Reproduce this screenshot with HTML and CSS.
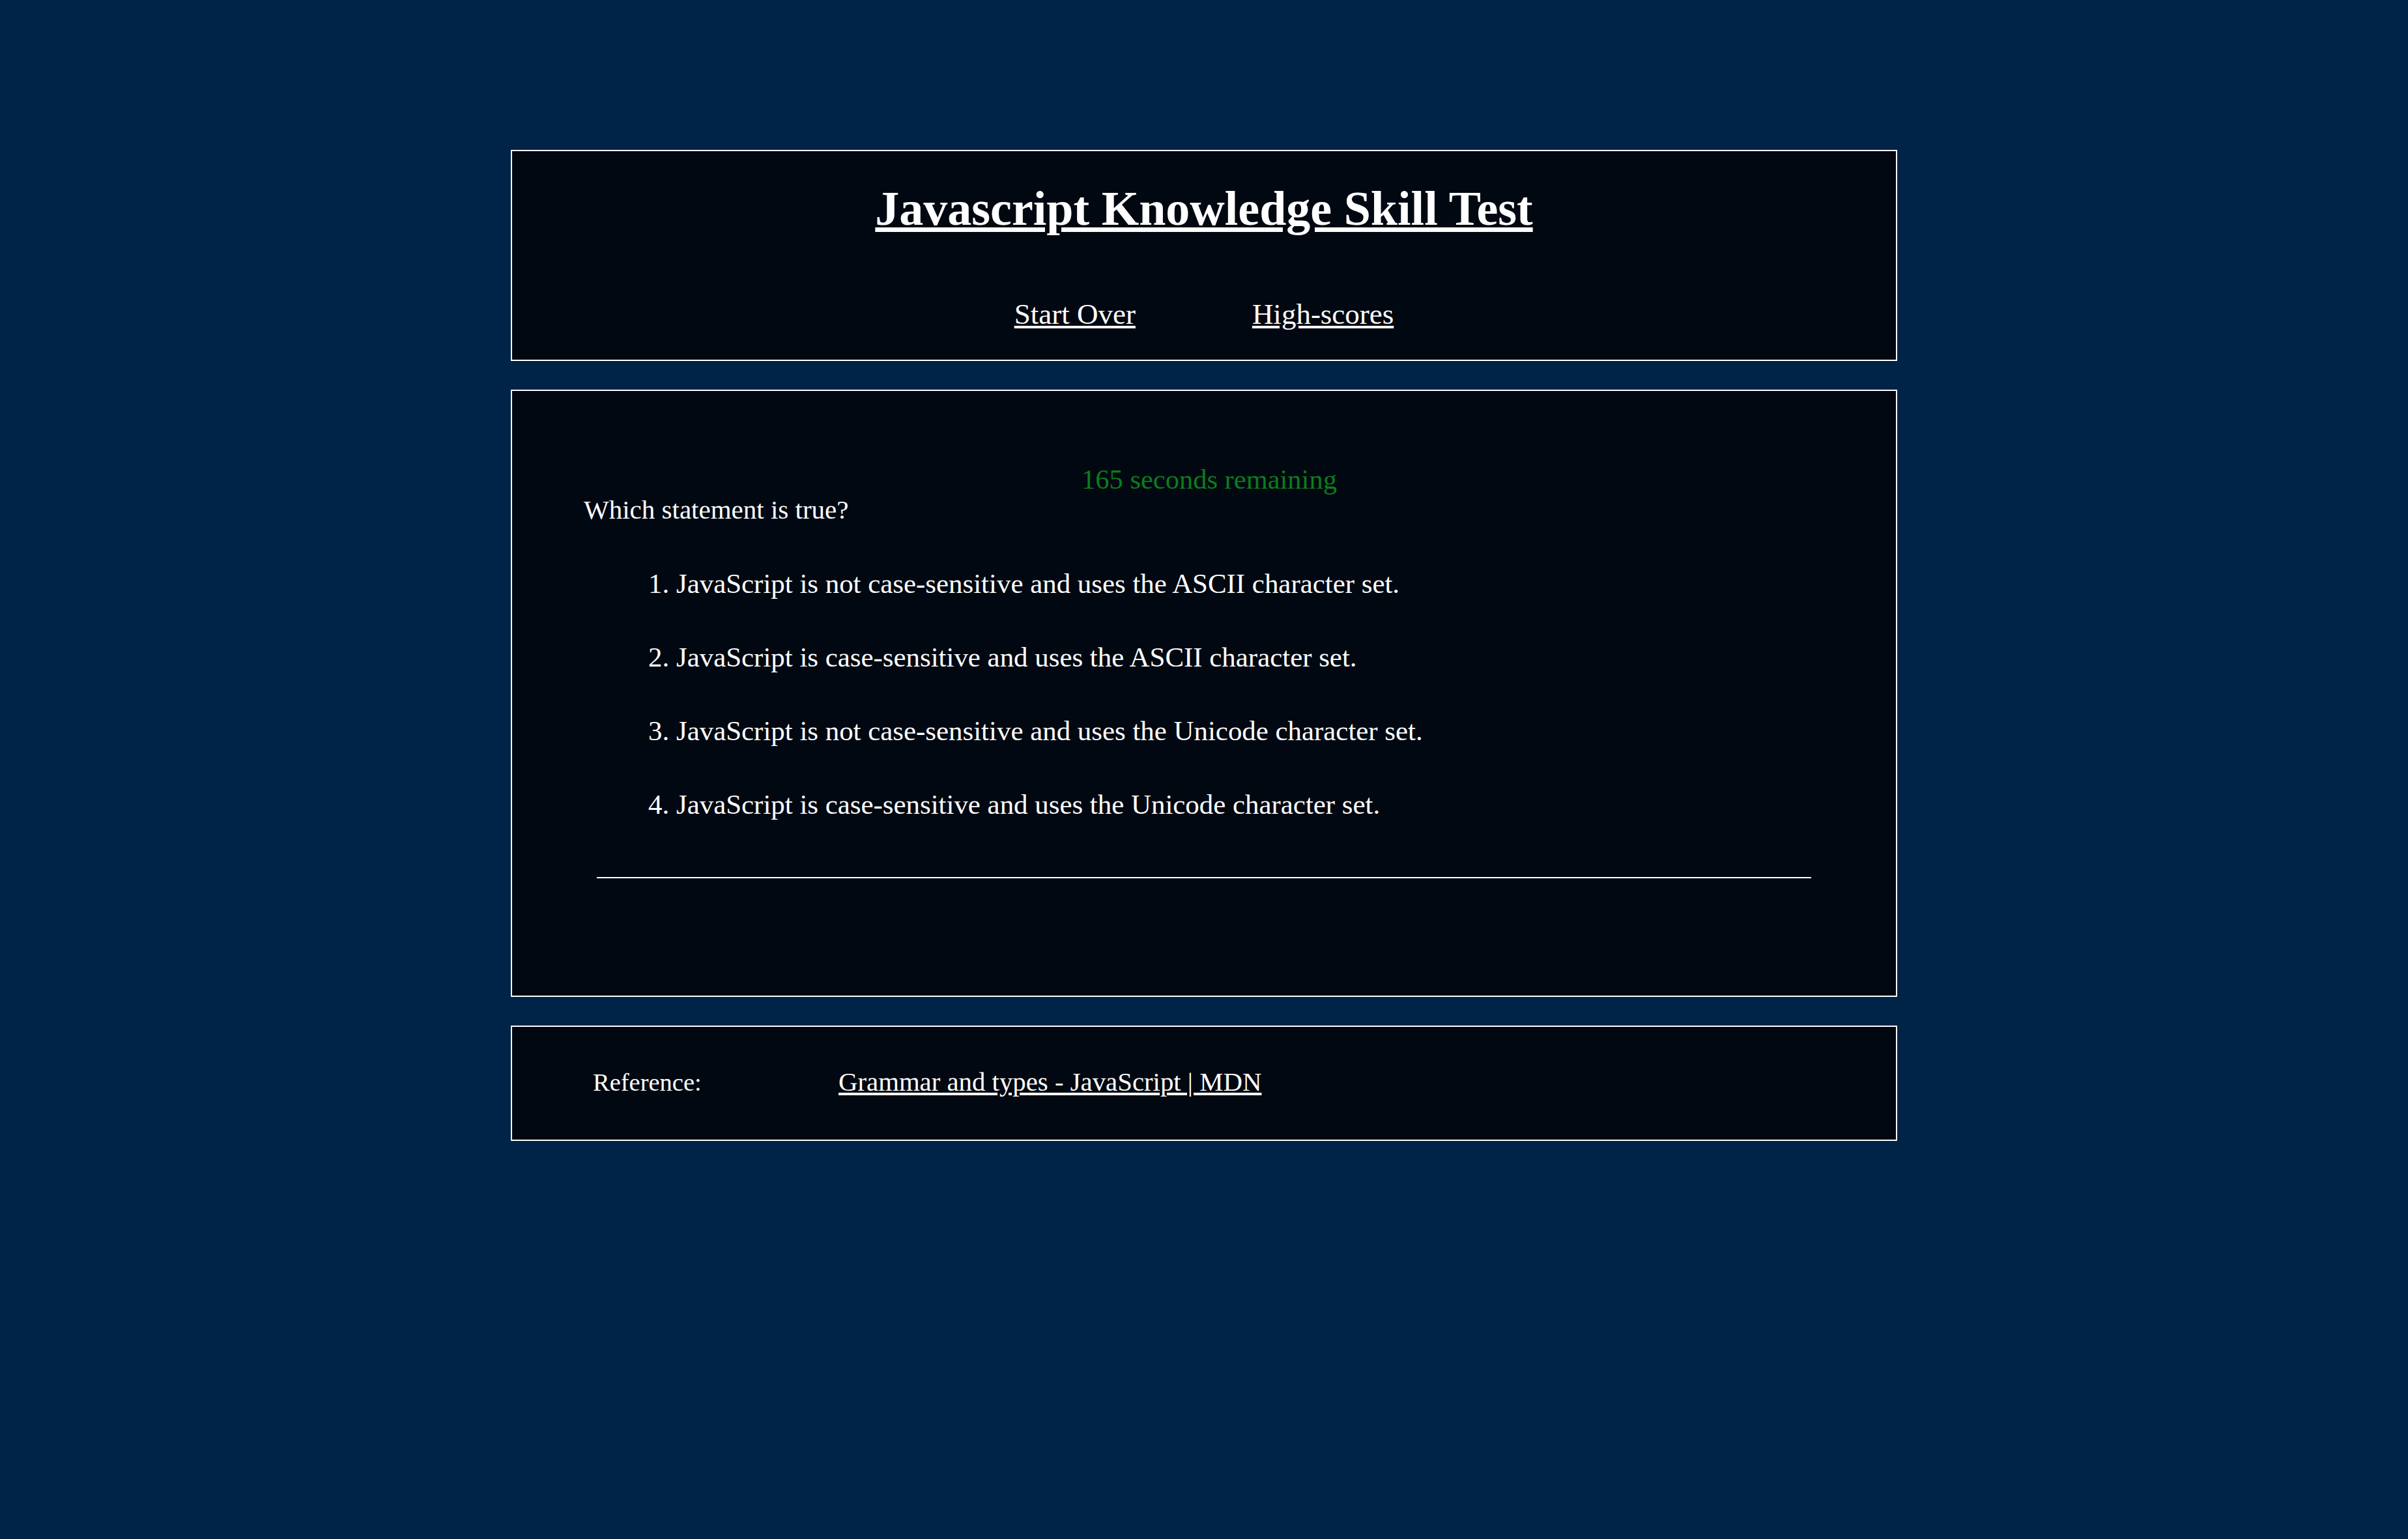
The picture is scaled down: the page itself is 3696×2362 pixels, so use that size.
FILE: index.html
```html
<!DOCTYPE html>
<html lang="en">
<head>
<meta charset="utf-8">
<title>Javascript Knowledge Skill Test</title>
<link rel="stylesheet" href="styles.css">
</head>
<body>
<main class="page">
  <header class="panel header">
    <h1 class="title">Javascript Knowledge Skill Test</h1>
    <nav class="nav">
      <a href="#" class="nav-link">Start Over</a>
      <a href="#" class="nav-link">High-scores</a>
    </nav>
  </header>

  <section class="panel quiz">
    <div class="timer">165 seconds remaining</div>
    <p class="question">Which statement is true?</p>
    <ol class="answers">
      <li class="answer">JavaScript is not case-sensitive and uses the ASCII character set.</li>
      <li class="answer">JavaScript is case-sensitive and uses the ASCII character set.</li>
      <li class="answer">JavaScript is not case-sensitive and uses the Unicode character set.</li>
      <li class="answer">JavaScript is case-sensitive and uses the Unicode character set.</li>
    </ol>
    <hr class="divider">
  </section>

  <footer class="panel reference">
    <span class="ref-label">Reference:</span>
    <a href="#" class="ref-link">Grammar and types - JavaScript | MDN</a>
  </footer>
</main>
</body>
</html>
```

FILE: styles.css
```css
html, body {
  margin: 0;
  padding: 0;
}

body {
  background: #002348;
  color: #ffffff;
  font-family: "Liberation Serif", "Times New Roman", serif;
}

.page {
  width: 2128px;
  margin: 0 auto;
  padding-top: 230px;
  display: flex;
  flex-direction: column;
  gap: 44px;
}

.panel {
  border: 2px solid #ffffff;
  background: #010811;
  box-sizing: border-box;
}

/* Header */
.header {
  padding: 46px 0 44px;
  display: flex;
  flex-direction: column;
  align-items: center;
}

.title {
  margin: 0;
  font-size: 74px;
  line-height: 84px;
  font-weight: bold;
  text-decoration: underline;
  color: #ffffff;
}

.nav {
  margin-top: 94px;
  display: flex;
  justify-content: center;
  gap: 179px;
}

.nav-link {
  font-size: 45px;
  line-height: 52px;
  color: #ffffff;
  text-decoration: underline;
}

/* Quiz */
.quiz {
  padding: 113px 110px 180px;
}

.timer {
  color: #0b7d1c;
  font-size: 42.5px;
  line-height: 46px;
  text-align: center;
  padding-left: 16px;
}

.question {
  margin: 0;
  font-size: 41px;
  line-height: 46px;
}

.answers {
  margin: 66px 0 0;
  padding-left: 142px;
}

.answer {
  font-size: 42.9px;
  line-height: 49px;
}

.answer + .answer {
  margin-top: 64px;
}

.divider {
  margin: 87px 20px 0;
  border: 0;
  height: 2px;
  background: #ffffff;
}

/* Reference */
.reference {
  padding: 62px 0 65px 124px;
  display: flex;
  align-items: baseline;
}

.ref-label {
  width: 377px;
  font-size: 38.5px;
  line-height: 46px;
}

.ref-link {
  font-size: 40.8px;
  line-height: 46px;
  color: #ffffff;
  text-decoration: underline;
}
```
